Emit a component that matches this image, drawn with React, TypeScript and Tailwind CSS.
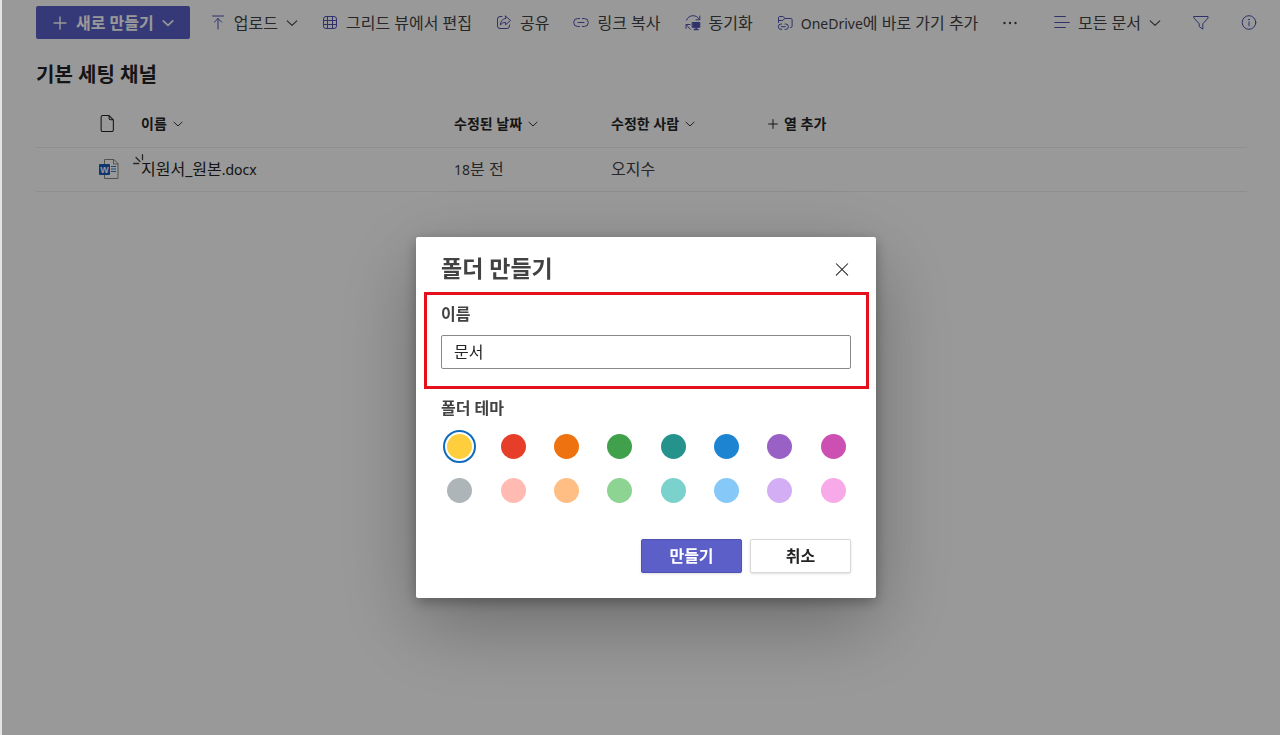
import type { ReactNode } from "react";

const strokeProps = {
  fill: "none",
  stroke: "currentColor",
  strokeLinecap: "round" as const,
  strokeLinejoin: "round" as const,
  "aria-hidden": true,
};

function Icon({ children, className = "size-4" }: { children: ReactNode; className?: string }) {
  return (
    <svg viewBox="0 0 16 16" strokeWidth={1} {...strokeProps} className={`shrink-0 ${className}`}>
      {children}
    </svg>
  );
}

function Chevron({ bold = false, small = false }: { bold?: boolean; small?: boolean }) {
  return (
    <svg
      viewBox="0 0 12 12"
      strokeWidth={bold ? 1.6 : 1.1}
      {...strokeProps}
      className={small ? "size-2.5 shrink-0" : "size-3 shrink-0"}
    >
      <path d="M1.2 3.8 6 8.4l4.8-4.6" />
    </svg>
  );
}

const UploadIcon = () => (
  <Icon>
    <path d="M2.500 1h11M8 14V3.500M4.300 7.200 8 3.500l3.700 3.700" />
  </Icon>
);

const GridIcon = () => (
  <Icon>
    <rect x="1.500" y="1.500" width="13" height="12" rx="2.500" />
    <path d="M1.500 5.500h13M1.500 9.500h13M5.500 1.500v12M10.500 1.500v12" />
  </Icon>
);

const ShareIcon = () => (
  <Icon>
    <path d="M6 1.500H4A2.500 2.500 0 0 0 1.500 4v7A2.500 2.500 0 0 0 4 13.500h7a2.500 2.500 0 0 0 2.500-2.500V10" />
    <path d="M9.500 1 14.500 5.500l-5 4.300V7.400C7.200 7.300 5.600 8.200 4.300 10.100c.2-3.500 2-6.200 5.200-6.600z" />
  </Icon>
);

const LinkIcon = () => (
  <Icon>
    <path d="M6.500 3.500H4.700a4 4 0 0 0 0 8h1.800M9.500 3.500h1.800a4 4 0 0 1 0 8H9.500M5 7.500h6" />
  </Icon>
);

const SyncIcon = () => (
  <Icon>
    <path d="M1.500 5.200C2.600 2.300 5 .7 8 .7c2.700 0 4.900 1.200 6.300 3.600M14.800 1v3.800h-3.800" />
    <path d="M1 13.500v-4h4M1.300 9.800l4 4.500" />
    <path d="M7.500 7.500h7.300v4.800H7.500z" fill="currentColor" />
    <path d="M11.200 12.500v2M9.300 14.500h3.800" strokeWidth={1.400} />
  </Icon>
);

const ShortcutIcon = () => (
  <Icon>
    <path d="M1.500 7.500V2.800c0-.7.500-1.300 1.300-1.300h3.400l1.700 2h6c.700 0 1.200.500 1.200 1.200v6.600c0 .7-.5 1.200-1.200 1.200h-.4M1.500 5.500h4.300l2-2" />
    <path d="M4.700 9H4a2.700 2.700 0 0 0 0 5.400h.7M8 9h.7a2.700 2.700 0 0 1 0 5.400H8M4.300 11.700h4" />
  </Icon>
);

const ListIcon = () => (
  <Icon>
    <path d="M.8 1.500h10.500M.8 7.500h14.400M.8 12.500h10.500" strokeWidth={1.200} />
  </Icon>
);

const FilterIcon = () => (
  <Icon>
    <path d="M1 1.500h14v1.600L9.800 8.800v5.400L6.200 11.500V8.800L1 3.100z" />
  </Icon>
);

const InfoIcon = () => (
  <Icon>
    <circle cx="8" cy="7.500" r="6.800" />
    <path d="M8 6.800v4" />
    <circle cx="8" cy="4.500" r=".4" fill="currentColor" />
  </Icon>
);

function WordIcon() {
  return (
    <svg viewBox="0 0 20 20" className="size-5" role="img" aria-label="Word">
      <path d="M5.500.500h9.500l4 4v15H5.500z" fill="#fff" stroke="#8a8886" />
      <path d="M14.500.500v4.500h4.500" fill="none" stroke="#8a8886" />
      <path d="M12 7.500h5M12 10h5M12 12.500h5" stroke="#2b7cd3" />
      <rect y="5" width="11" height="11" rx="1" fill="#185abd" />
      <text x="5.500" y="13.500" textAnchor="middle" fill="#fff" className="font-['Liberation_Sans',sans-serif] text-[9px] font-bold">
        W
      </text>
    </svg>
  );
}

function Command({ icon, children, menu = false }: { icon: ReactNode; children: ReactNode; menu?: boolean }) {
  return (
    <button type="button" className="flex items-center gap-2 whitespace-nowrap">
      <span className="text-[#4f52b2]">{icon}</span>
      <span>{children}</span>
      {menu && <Chevron />}
    </button>
  );
}

function ColumnButton({ children }: { children: ReactNode }) {
  return (
    <button type="button" className="flex items-center gap-1.5 font-bold">
      {children}
      <Chevron small />
    </button>
  );
}

const themes = [
  { name: "노랑", color: "bg-[#ffce3d]" },
  { name: "빨강", color: "bg-[#e63e29]" },
  { name: "주황", color: "bg-[#ee720f]" },
  { name: "초록", color: "bg-[#40a04b]" },
  { name: "청록", color: "bg-[#25938c]" },
  { name: "파랑", color: "bg-[#1c84d1]" },
  { name: "보라", color: "bg-[#9961c5]" },
  { name: "분홍", color: "bg-[#cc50b2]" },
  { name: "회색", color: "bg-[#aeb5b9]" },
  { name: "연한 빨강", color: "bg-[#ffbab2]" },
  { name: "연한 주황", color: "bg-[#ffbe83]" },
  { name: "연한 초록", color: "bg-[#8dd391]" },
  { name: "연한 청록", color: "bg-[#7bd1cc]" },
  { name: "연한 파랑", color: "bg-[#86c8f8]" },
  { name: "연한 보라", color: "bg-[#d3aef5]" },
  { name: "연한 분홍", color: "bg-[#f8a9e7]" },
];

function CommandBar() {
  return (
    <div className="flex items-center gap-6 text-base text-[#424242]">
      <button
        type="button"
        className="-mr-1 flex h-[33px] items-center gap-2 rounded-xs bg-[#5b5fc7] px-4 font-bold whitespace-nowrap text-white"
      >
        <Icon>
          <path d="M8 2v12M2 8h12" strokeWidth={1.400} />
        </Icon>
        새로 만들기
        <Chevron bold />
      </button>
      <Command icon={<UploadIcon />} menu>업로드</Command>
      <Command icon={<GridIcon />}>그리드 뷰에서 편집</Command>
      <Command icon={<ShareIcon />}>공유</Command>
      <Command icon={<LinkIcon />}>링크 복사</Command>
      <Command icon={<SyncIcon />}>동기화</Command>
      <Command icon={<ShortcutIcon />}>
        <span className="text-sm">OneDrive</span>에 바로 가기 추가
      </Command>
      <button type="button" aria-label="더 보기">
        <Icon>
          <g fill="currentColor" stroke="none">
            <circle cx="2.500" cy="8" r="1.200" />
            <circle cx="8" cy="8" r="1.200" />
            <circle cx="13.500" cy="8" r="1.200" />
          </g>
        </Icon>
      </button>
      <div className="ml-auto flex items-center gap-8">
        <Command icon={<ListIcon />} menu>모든 문서</Command>
        <button type="button" aria-label="필터" className="text-[#4f52b2]">
          <FilterIcon />
        </button>
        <button type="button" aria-label="정보" className="text-[#4f52b2]">
          <InfoIcon />
        </button>
      </div>
    </div>
  );
}

function FileTable() {
  return (
    <table className="w-full table-fixed border-collapse text-left">
      <colgroup>
        <col className="w-[105px]" />
        <col className="w-[313px]" />
        <col className="w-[157px]" />
        <col className="w-[157px]" />
        <col />
      </colgroup>
      <thead>
        <tr className="h-[46px] border-b border-[#ededed] text-sm text-[#242424]">
          <th className="pl-[63px]">
            <Icon className="size-[17px]">
              <path d="M3.500.500h6l4 4V14a1.500 1.500 0 0 1-1.500 1.500H3.500A1.500 1.500 0 0 1 2 14V2A1.500 1.500 0 0 1 3.500.500zM9.500.500V3A1.500 1.500 0 0 0 11 4.500h2.500" />
            </Icon>
          </th>
          <th><ColumnButton>이름</ColumnButton></th>
          <th><ColumnButton>수정된 날짜</ColumnButton></th>
          <th><ColumnButton>수정한 사람</ColumnButton></th>
          <th>
            <button type="button" className="flex items-center gap-1.5 font-bold">
              <Icon className="size-2.5">
                <path d="M8 1v14M1 8h14" strokeWidth={1.600} />
              </Icon>
              열 추가
            </button>
          </th>
        </tr>
      </thead>
      <tbody>
        <tr className="h-11 border-b border-[#ededed] text-base text-[#424242]">
          <td className="pl-[63px]"><WordIcon /></td>
          <td className="relative">
            <svg viewBox="0 0 12 12" strokeWidth={1.300} {...strokeProps} className="absolute -left-2 top-1.5 size-3">
              <path d="M.7 9.500h5M3 3.500l4 4M9.500.700v5" />
            </svg>
            <a href="#document" className="text-[#242424]">
              지원서_원본<span className="text-sm">.docx</span>
            </a>
          </td>
          <td><span className="text-sm">18</span>분 전</td>
          <td>오지수</td>
          <td />
        </tr>
      </tbody>
    </table>
  );
}

function CreateFolderDialog() {
  return (
    <form
      role="dialog"
      aria-modal="true"
      aria-labelledby="dialog-title"
      className="w-full max-w-[460px] rounded-xs bg-white pr-[7px] pb-[25px] pl-2 text-base text-[#424242] shadow-[0_26px_80px_rgba(0,0,0,0.3),0_4px_14px_rgba(0,0,0,0.3)]"
    >
      <div className="flex h-[55px] items-center justify-between pt-2 pr-5 pl-[17px]">
        <h2 id="dialog-title" className="text-[23px] font-bold">폴더 만들기</h2>
        <button type="button" aria-label="닫기" className="text-[#242424]">
          <Icon className="size-3.5">
            <path d="M1.500 2 14.500 15M14.500 2 1.500 15" strokeWidth={1.200} />
          </Icon>
        </button>
      </div>
      <div className="border-[3px] border-[#e60f1c] pt-[7px] pr-[15px] pb-[17px] pl-3.5">
        <label htmlFor="folder-name" className="mb-[9px] block font-bold">이름</label>
        <input
          id="folder-name"
          type="text"
          defaultValue="문서"
          className="block h-[34px] w-full rounded-xs border border-[#8a8886] px-3 pb-0.5 text-[#242424] outline-none"
        />
      </div>
      <fieldset className="mt-[7px] px-[9px]">
        <legend className="px-2 font-bold">폴더 테마</legend>
        <div className="mt-1 grid grid-cols-8">
          {themes.map((theme, index) => (
            <label key={theme.name} className="flex h-11 items-center justify-center">
              <input
                type="radio"
                name="folder-theme"
                aria-label={theme.name}
                defaultChecked={index === 0}
                className={`size-[25px] appearance-none rounded-full outline-offset-2 outline-[#0f6cbd] checked:outline-2 ${theme.color}`}
              />
            </label>
          ))}
        </div>
      </fieldset>
      <div className="mt-[27px] flex justify-end gap-2 pr-[18px]">
        <button type="submit" className="h-[34px] w-[101px] rounded-xs border border-[#4f52b2] bg-[#5b5fc7] font-bold text-white shadow-sm">
          만들기
        </button>
        <button type="button" className="h-[34px] w-[101px] rounded-xs border border-[#d8d8d8] bg-white font-bold text-[#242424] shadow-sm">
          취소
        </button>
      </div>
    </form>
  );
}

export default function App() {
  return (
    <div className="min-h-screen border-l-2 border-[#e4e4e4] bg-white font-['Noto_Sans','Noto_Sans_CJK_KR',sans-serif]">
      <main className="pt-1.5 pr-[23px] pl-[34px]">
        <CommandBar />
        <div className="pr-2.5">
          <h1 className="mt-[22px] mb-3 text-xl font-bold text-[#242424]">기본 세팅 채널</h1>
          <FileTable />
        </div>
      </main>
      <div className="fixed inset-0 left-0.5 flex items-center justify-center bg-black/40 pt-[100px] pl-2.5">
        <CreateFolderDialog />
      </div>
    </div>
  );
}
